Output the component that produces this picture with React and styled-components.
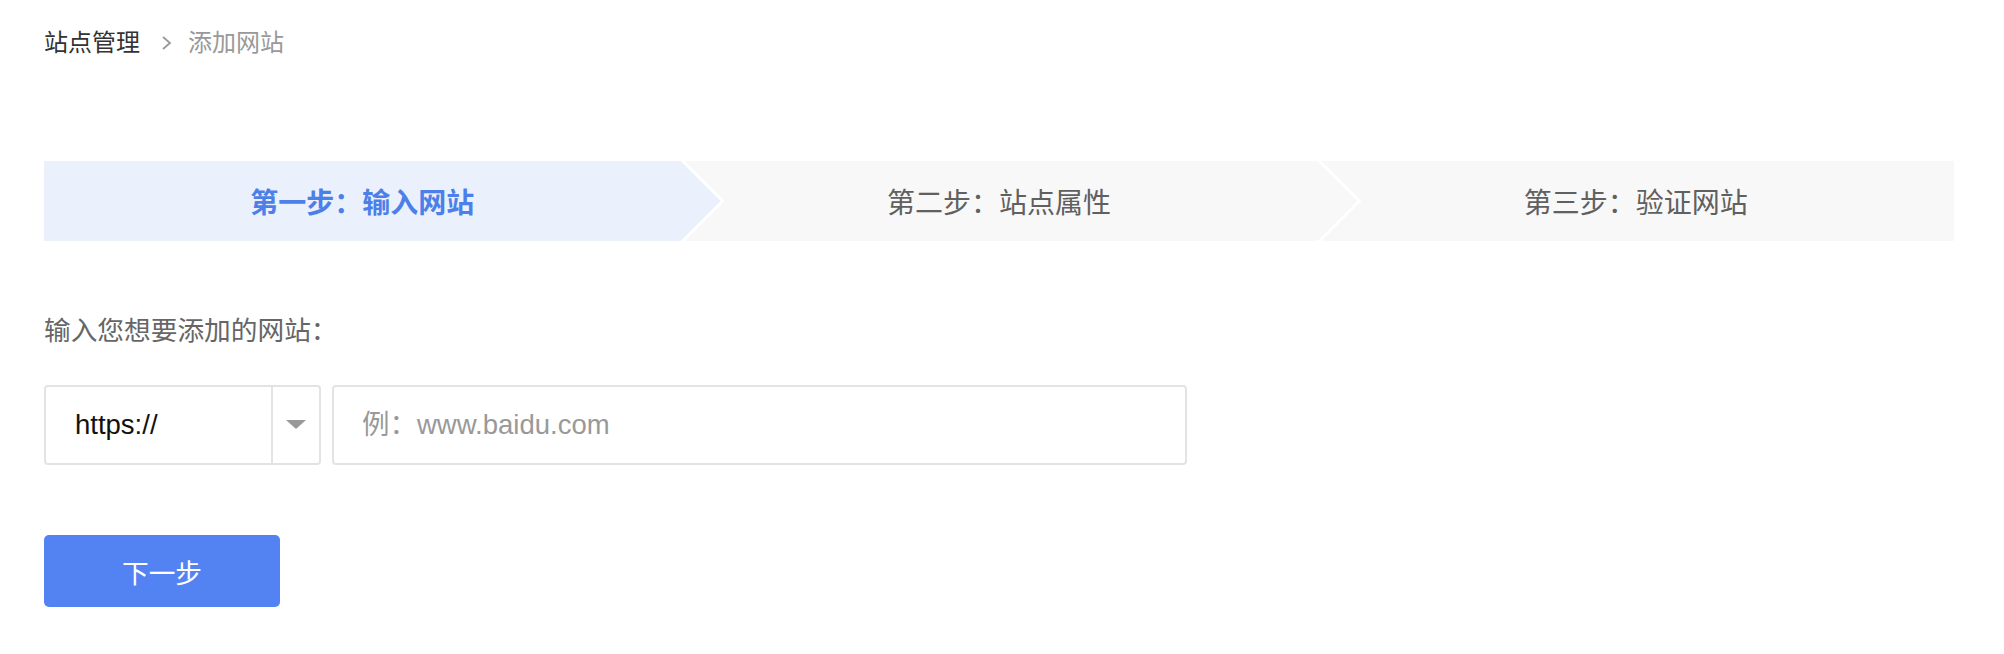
import React, { useState } from 'react';
import styled, { createGlobalStyle } from 'styled-components';

const GlobalStyle = createGlobalStyle`
  html, body {
    margin: 0;
    padding: 0;
    background: #ffffff;
  }
  body {
    font-family: "Liberation Sans", "Noto Sans CJK SC", sans-serif;
    color: #333333;
  }
  * {
    box-sizing: border-box;
  }
`;

const steps = ['第一步：输入网站', '第二步：站点属性', '第三步：验证网站'];

function App() {
  const [protocol] = useState('https://');
  const [site, setSite] = useState('');

  return (
    <Page>
      <GlobalStyle />
      <Breadcrumb>
        <Crumb>站点管理</Crumb>
        <Chevron width="12" height="16" viewBox="0 0 12 16">
          <polyline points="2,2 9,8 2,14" fill="none" stroke="#999" strokeWidth="1.8" />
        </Chevron>
        <Crumb $current>添加网站</Crumb>
      </Breadcrumb>

      <StepBar>
        {steps.map((label, index) => (
          <Step key={label} $index={index} $active={index === 0}>
            {label}
          </Step>
        ))}
      </StepBar>

      <Label>输入您想要添加的网站：</Label>

      <FieldRow>
        <ProtocolSelect>
          <ProtocolValue>{protocol}</ProtocolValue>
          <SelectArrow>
            <svg width="20" height="10" viewBox="0 0 20 10">
              <polygon points="0,0 20,0 10,9" fill="#999" />
            </svg>
          </SelectArrow>
        </ProtocolSelect>
        <SiteInput
          type="text"
          placeholder="例：www.baidu.com"
          value={site}
          onChange={(e) => setSite(e.target.value)}
        />
      </FieldRow>

      <NextButton type="button">下一步</NextButton>
    </Page>
  );
}

export default App;

const Page = styled.div`
  padding: 27px 50px 0 44px;
`;

const Breadcrumb = styled.div`
  display: flex;
  align-items: center;
  height: 32px;
  font-size: 24px;
  line-height: 32px;
`;

const Crumb = styled.span`
  color: ${({ $current }) => ($current ? '#999999' : '#333333')};
`;

const Chevron = styled.svg`
  margin: 0 15px 0 21px;
`;

const StepBar = styled.div`
  display: flex;
  height: 80px;
  margin-top: 102px;
  background: #ffffff;
`;

// arrow shapes: 40px point, 4px white gap between steps
const stepShapes = [
  {
    width: 'calc(33.3333% + 40px)',
    margin: '0',
    padding: '0 40px 0 0',
    clip: 'polygon(0 0, calc(100% - 40px) 0, 100% 50%, calc(100% - 40px) 100%, 0 100%)',
  },
  {
    width: 'calc(33.3333% + 36px)',
    margin: '-36px',
    padding: '0 44px 0 0',
    clip: 'polygon(0 0, calc(100% - 40px) 0, 100% 50%, calc(100% - 40px) 100%, 0 100%, 40px 50%)',
  },
  {
    width: 'calc(33.3333% - 4px)',
    margin: '-36px',
    padding: '0 4px 0 0',
    clip: 'polygon(0 0, 100% 0, 100% 100%, 0 100%, 40px 50%)',
  },
];

const Step = styled.div`
  flex: none;
  width: ${({ $index }) => stepShapes[$index].width};
  margin-left: ${({ $index }) => stepShapes[$index].margin};
  padding: ${({ $index }) => stepShapes[$index].padding};
  clip-path: ${({ $index }) => stepShapes[$index].clip};
  display: flex;
  align-items: center;
  justify-content: center;
  background: ${({ $active }) => ($active ? '#eaf1fd' : '#f8f8f8')};
  color: ${({ $active }) => ($active ? '#4d7fe9' : '#606060')};
  font-weight: ${({ $active }) => ($active ? 700 : 400)};
  font-size: 28px;
`;

const Label = styled.div`
  margin-top: 70px;
  height: 40px;
  line-height: 40px;
  font-size: 26.7px;
  color: #666666;
`;

const FieldRow = styled.div`
  display: flex;
  gap: 11px;
  margin-top: 34px;
`;

const ProtocolSelect = styled.div`
  display: flex;
  width: 277px;
  height: 80px;
  border: 2px solid #e3e3e3;
  border-radius: 4px;
  background: #ffffff;
`;

const ProtocolValue = styled.div`
  flex: 1;
  display: flex;
  align-items: center;
  padding-left: 29px;
  font-size: 27.5px;
  color: #111111;
`;

const SelectArrow = styled.div`
  width: 48px;
  display: flex;
  align-items: center;
  justify-content: center;
  border-left: 2px solid #e3e3e3;
`;

const SiteInput = styled.input`
  width: 855px;
  height: 80px;
  padding: 0 28px;
  border: 2px solid #e3e3e3;
  border-radius: 4px;
  outline: none;
  font-family: "Liberation Sans", "Noto Sans CJK SC", sans-serif;
  font-size: 27.5px;
  color: #333333;

  &::placeholder {
    color: #999999;
  }
`;

const NextButton = styled.button`
  display: block;
  margin-top: 70px;
  width: 236px;
  height: 72px;
  border: none;
  border-radius: 5px;
  background: #5383f3;
  color: #ffffff;
  font-family: "Liberation Sans", "Noto Sans CJK SC", sans-serif;
  font-size: 26.7px;
  cursor: pointer;
`;
